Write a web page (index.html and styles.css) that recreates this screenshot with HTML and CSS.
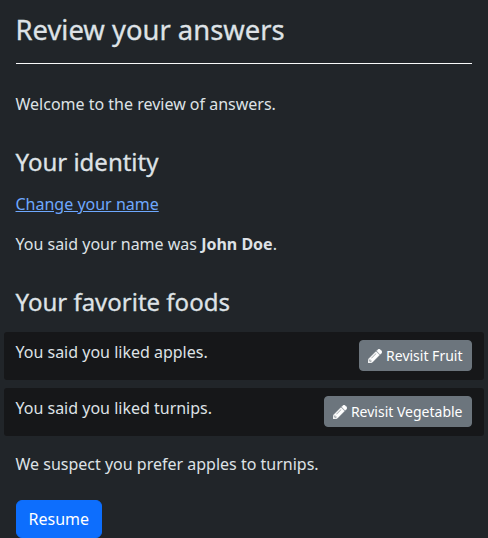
FILE: index.html
```html
<!DOCTYPE html>
<html lang="en">
<head>
<meta charset="utf-8">
<title>Review your answers</title>
<link rel="stylesheet" href="styles.css">
</head>
<body>
<svg class="defs" aria-hidden="true"><symbol id="pencil" viewBox="0 0 512 512"><path d="M497.9 142.1l-46.1 46.1c-4.7 4.7-12.3 4.7-17 0l-111-111c-4.7-4.7-4.7-12.3 0-17l46.1-46.1c18.7-18.7 49.1-18.7 67.900 0l60.100 60.100c18.800 18.700 18.800 49.100 0 67.900zM284.200 99.800L21.600 362.400.4 483.900c-2.900 16.400 11.400 30.600 27.800 27.800l121.500-21.300 262.600-262.600c4.700-4.700 4.700-12.300 0-17l-111-111c-4.800-4.700-12.400-4.700-17.100 0zM124.100 339.900c-5.500-5.500-5.500-14.300 0-19.800l154-154c5.500-5.500 14.300-5.500 19.800 0s5.500 14.300 0 19.800l-154 154c-5.500 5.500-14.300 5.500-19.800 0zM88 424h48v36.300l-64.500 11.300-31.100-31.100L51.700 376H88v48z"/></symbol></svg>
<main>
<h1>Review your answers</h1>
<p>Welcome to the review of answers.</p>
<h2>Your identity</h2>
<p><a href="#">Change your name</a></p>
<p>You said your name was <strong>John Doe</strong>.</p>
<h2>Your favorite foods</h2>
<div class="row"><p>You said you liked apples.</p><a class="btn small" href="#"><svg class="icon"><use href="#pencil"/></svg> Revisit Fruit</a></div>
<div class="row"><p>You said you liked turnips.</p><a class="btn small" href="#"><svg class="icon"><use href="#pencil"/></svg> Revisit Vegetable</a></div>
<p class="after">We suspect you prefer apples to turnips.</p>
<button class="btn primary" type="button">Resume</button>
</main>
</body>
</html>
```
FILE: styles.css
```css
* { box-sizing: border-box; }
html { overflow: hidden; }
body { margin: 0; background: #212529; color: #dee2e6; font: 16px/24px "Noto Sans", sans-serif; }
.defs { display: none; }
main { padding: 13px 16px 0 15.5px; }
h1, h2 { font-weight: 400; -webkit-text-stroke: 0.3px; }
h1 { margin: 0 0 28px .5px; padding-bottom: 17px; border-bottom: 1px solid #f8f9fa; font-size: 27.4px; line-height: 33px; text-indent: -.5px; }
h2 { margin: 0 0 16px; padding-top: 15px; font-size: 24px; line-height: 29px; }
p { margin: 0 0 16px; }
a { color: #6ea8fe; }
.row { display: flex; justify-content: space-between; align-items: flex-start; height: 48px; margin: 0 -12px 8px -11.5px; padding: 8px 12px 8px 11.5px; border-radius: 3px; background: #161719; }
.row p { margin: 0; }
.btn { display: inline-block; border: 1px solid; font-family: inherit; text-decoration: none; }
.small { padding: 4px 8.5px 4px 8px; border-color: #6c757d; border-radius: 4px; background: #6c757d; color: #fff; font-size: 14px; line-height: 21px; }
.icon { width: 14px; height: 14px; vertical-align: -2px; fill: currentColor; stroke: currentColor; stroke-width: 16px; }
.after { margin: 16px 0 24px; }
.primary { margin-left: .5px; padding: 6px 12px 6px 11.5px; border-color: #0d6efd; border-radius: 6px; background: #0d6efd; color: #fff; font-size: 16px; line-height: 24px; }
```
